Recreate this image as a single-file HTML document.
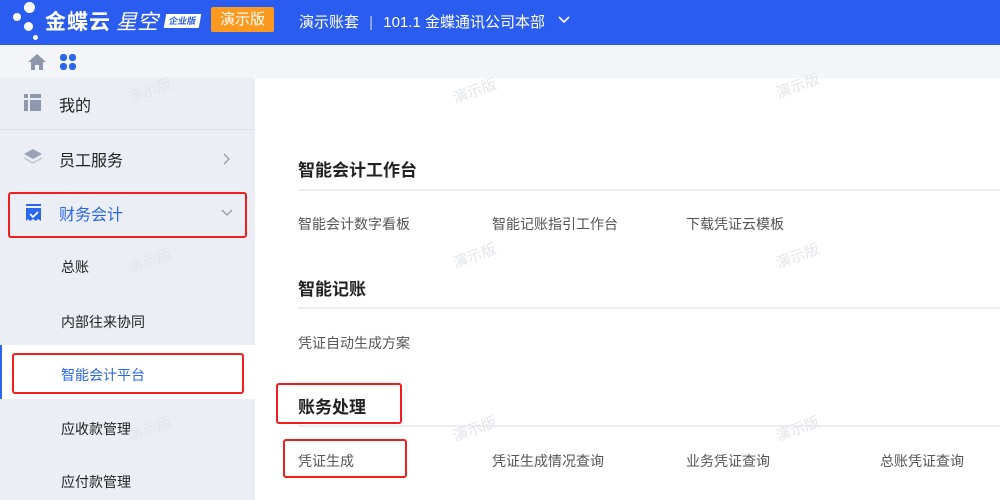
<!DOCTYPE html>
<html><head><meta charset="utf-8"><style>
*{margin:0;padding:0;box-sizing:border-box}
body{width:1000px;height:500px;overflow:hidden;font-family:"Liberation Sans","Noto Sans CJK SC",sans-serif;background:#fff;position:relative}
.hdr{position:absolute;left:0;top:0;width:1000px;height:45px;background:#2b5cf0;color:#fff}
.dot{position:absolute;background:#fff;border-radius:50%}
.tab{position:absolute;left:0;top:45px;width:1000px;height:33px;background:#f4f5f8}
.side{position:absolute;left:0;top:78px;width:255px;height:422px;background:#eceef5}
.abs{position:absolute;white-space:nowrap}
.red{position:absolute;border:2.5px solid #f21d1d;border-radius:3px}
.wm{position:absolute;color:#e3e5ea;font-size:15px;transform:rotate(-20deg);white-space:nowrap}
.line{position:absolute;left:298px;width:702px;height:2px;background:#eceef3}
.sec{font-size:17px;color:#222;font-weight:bold}
.lnk{font-size:14px;color:#555}
.sm{font-size:14px;color:#222}
</style></head><body>
<div class="hdr">
 <div class="dot" style="left:24px;top:2px;width:11px;height:11px"></div>
 <div class="dot" style="left:13px;top:13px;width:8px;height:8px"></div>
 <div class="dot" style="left:24px;top:22px;width:9px;height:9px"></div>
 <div class="dot" style="left:33px;top:35px;width:5px;height:5px"></div>
 <div class="abs" style="left:45px;top:6px;font-size:21px;font-weight:bold;letter-spacing:1px">金蝶云</div>
 <div class="abs" style="left:116px;top:6px;font-size:21px;font-style:italic">星空</div>
 <div class="abs" style="left:165px;top:14px;width:35px;height:14px;background:#fff;color:#2b5cf0;font-size:9px;font-weight:bold;text-align:center;line-height:14px;transform:skewX(-10deg)">企业版</div>
 <div class="abs" style="left:211px;top:7px;width:63px;height:25px;background:#fb9a1e;border-radius:2px;font-size:15px;text-align:center;line-height:25px">演示版</div>
 <div class="abs" style="left:299px;top:11px;font-size:15px">演示账套 <span style="opacity:.7;margin:0 6px">|</span> 101.1 金蝶通讯公司本部</div>
 <svg class="abs" style="left:557px;top:15px" width="14" height="10"><path d="M2 2l5 5 5-5" stroke="#fff" stroke-width="1.6" fill="none"/></svg>
</div>
<div class="tab">
 <svg class="abs" style="left:27px;top:8px" width="20" height="18"><path d="M10 1L1 9h3v8h4v-5h4v5h4V9h3z" fill="#8e97ab"/></svg>
 <svg class="abs" style="left:59px;top:8px" width="18" height="18"><rect x="1" y="1" width="7" height="7" rx="3" fill="#2b66ee"/><rect x="10" y="1" width="7" height="7" rx="3" fill="#2b66ee"/><rect x="1" y="10" width="7" height="7" rx="3" fill="#2b66ee"/><rect x="10" y="10" width="7" height="7" rx="3" fill="#2b66ee"/></svg>
</div>
<div class="side">
 <svg class="abs" style="left:24px;top:16px" width="17" height="17"><rect x="0" y="0" width="4" height="4" fill="#8e97ab"/><rect x="6" y="0" width="11" height="4" fill="#8e97ab"/><rect x="0" y="6" width="4" height="11" fill="#8e97ab"/><rect x="6" y="6" width="11" height="11" fill="#8e97ab"/></svg>
 <div class="abs" style="left:59px;top:14px;font-size:16px;color:#222">我的</div>
 <div style="position:absolute;left:0;top:51px;width:255px;height:1px;background:#dfe1e8"></div>
 <svg class="abs" style="left:23px;top:70px" width="20" height="18"><path d="M10 1l9 5-9 5-9-5z" fill="#9aa2b5"/><path d="M1 10l9 5 9-5" stroke="#c4c8d4" stroke-width="1.5" fill="none"/></svg>
 <div class="abs" style="left:59px;top:69px;font-size:16px;color:#222">员工服务</div>
 <svg class="abs" style="left:222px;top:74px" width="10" height="14"><path d="M2 2l5 5-5 5" stroke="#999" stroke-width="1.3" fill="none"/></svg>
 <svg class="abs" style="left:25px;top:126px" width="17" height="18"><rect x="1" y="0" width="15" height="2" fill="#2b66ee"/><path d="M1 4h15v13l-3-2-2 2-3-2-3 2-2-2-2 2z" fill="#2b66ee"/><path d="M5 10l3 3 5-5" stroke="#fff" stroke-width="1.6" fill="none"/></svg>
 <div class="abs" style="left:59px;top:123px;font-size:16px;color:#2b66ee">财务会计</div>
 <svg class="abs" style="left:220px;top:130px" width="14" height="10"><path d="M2 2l5 5 5-5" stroke="#999" stroke-width="1.3" fill="none"/></svg>
 <div class="abs sm" style="left:61px;top:179px">总账</div>
 <div class="abs sm" style="left:61px;top:234px">内部往来协同</div>
 <div style="position:absolute;left:0;top:267px;width:255px;height:54px;background:#fff"></div>
 <div style="position:absolute;left:0;top:267px;width:2px;height:54px;background:#2b66ee"></div>
 <div class="abs sm" style="left:61px;top:287px;color:#2b66ee">智能会计平台</div>
 <div class="abs sm" style="left:61px;top:341px">应收款管理</div>
 <div class="abs sm" style="left:61px;top:394px">应付款管理</div>
</div>
<div class="red" style="left:8px;top:192px;width:239px;height:46px"></div>
<div class="red" style="left:12px;top:353px;width:232px;height:41px"></div>

<div class="abs sec" style="left:298px;top:156px">智能会计工作台</div>
<div class="line" style="top:189px"></div>
<div class="abs lnk" style="left:298px;top:214px">智能会计数字看板</div>
<div class="abs lnk" style="left:492px;top:214px">智能记账指引工作台</div>
<div class="abs lnk" style="left:686px;top:214px">下载凭证云模板</div>
<div class="abs sec" style="left:298px;top:275px">智能记账</div>
<div class="line" style="top:307px"></div>
<div class="abs lnk" style="left:298px;top:333px">凭证自动生成方案</div>
<div class="abs sec" style="left:298px;top:393px">账务处理</div>
<div class="line" style="top:425px"></div>
<div class="abs lnk" style="left:298px;top:451px">凭证生成</div>
<div class="abs lnk" style="left:492px;top:451px">凭证生成情况查询</div>
<div class="abs lnk" style="left:686px;top:451px">业务凭证查询</div>
<div class="abs lnk" style="left:880px;top:451px">总账凭证查询</div>
<div class="red" style="left:276px;top:383px;width:126px;height:41px"></div>
<div class="red" style="left:283px;top:439px;width:124px;height:39px"></div>

<div class="wm" style="left:127px;top:80px">演示版</div>
<div class="wm" style="left:452px;top:80px">演示版</div>
<div class="wm" style="left:775px;top:75px">演示版</div>
<div class="wm" style="left:127px;top:250px">演示版</div>
<div class="wm" style="left:452px;top:245px">演示版</div>
<div class="wm" style="left:775px;top:245px">演示版</div>
<div class="wm" style="left:127px;top:418px">演示版</div>
<div class="wm" style="left:452px;top:418px">演示版</div>
<div class="wm" style="left:775px;top:418px">演示版</div>
</body></html>
